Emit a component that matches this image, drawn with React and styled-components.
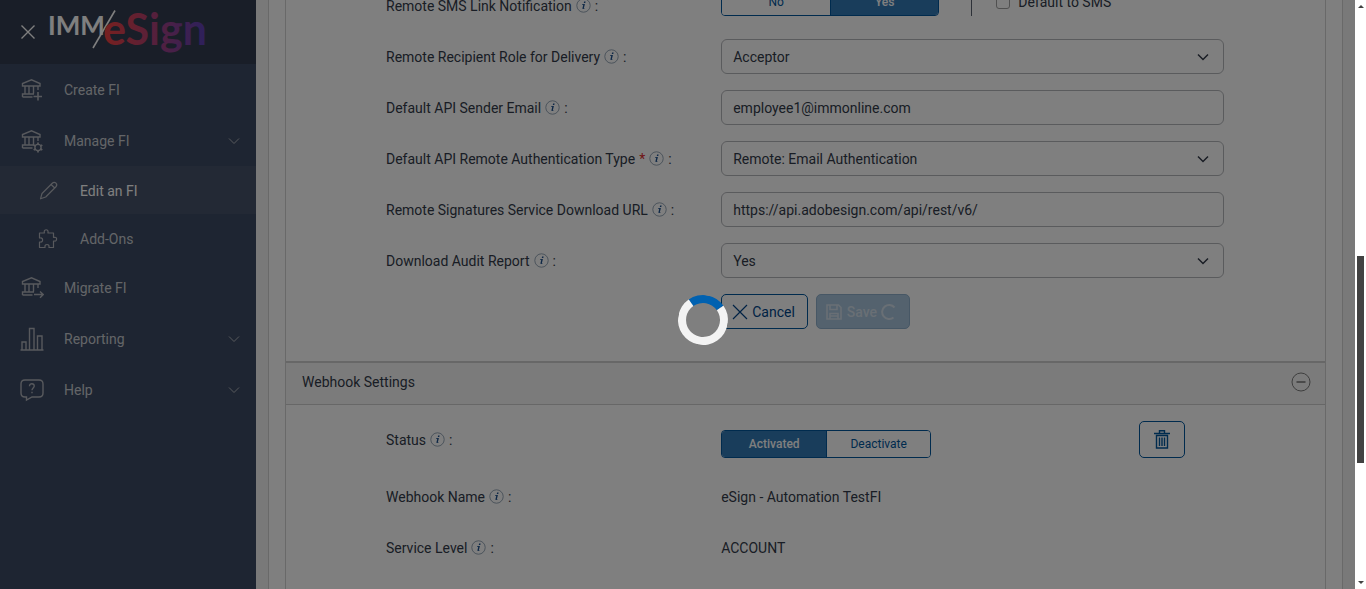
import React from 'react'
import styled, { createGlobalStyle } from 'styled-components'

const GlobalStyle = createGlobalStyle`
    *{
        box-sizing:border-box;
    }
    body{
        margin:0;
        font-family:Roboto, "Liberation Sans", sans-serif;
        font-size:14px;
        line-height:20px;
        color:#333b4a;
        background-color:#ffffff;
    }
    button, input, select{
        font:inherit;
        color:inherit;
        margin:0;
    }
`

const Page = styled.div`
    display:flex;
    height:100vh;
    overflow:hidden;
`

/* sidebar */
const Sidebar = styled.nav`
    flex:none;
    width:256px;
    background-color:#3c4a64;
    color:#c8cad0;
`

const SidebarTop = styled.div`
    display:flex;
    align-items:center;
    height:64px;
    padding-left:20px;
    gap:12px;
    background-color:#323c50;
`

const CloseButton = styled.button`
    display:flex;
    padding:0;
    border:0;
    background:none;
    color:#ffffff;
`

const MenuLink = styled.a`
    display:flex;
    align-items:center;
    height:${props => props.$sub ? "48px" : "51px"};
    padding:${props => props.$sub ? "2px 16px 0 36px" : "0 16px 0 20px"};
    gap:20px;
    color:${props => props.$active ? "#ffffff" : "inherit"};
    background-color:${props => props.$active ? "#46526a" : "transparent"};
    text-decoration:none;

    svg{
        flex:none;
        color:#b0b3ba;
    }
`

const MenuText = styled.span`
    flex:1;
`

/* content */
const Content = styled.main`
    flex:1;
    min-width:0;
    padding:0 12px;
    background-color:#f2f2f2;
    overflow:hidden;
`

const Panel = styled.div`
    min-height:100%;
    padding:0 16px;
    border:solid #d2d2d2;
    border-width:0 1px;
    background-color:#ffffff;
`

const Sections = styled.div`
    min-height:100vh;
    border:solid #d2d2d2;
    border-width:0 1px;
`

const Form = styled.form`
    display:flex;
    flex-direction:column;
    gap:16px;
    padding:${props => props.$scrolled ? "0 101px 32px 100px" : "16px 101px 32px 100px"};
    margin-top:${props => props.$scrolled ? "-12px" : "0"};
`

const Row = styled.div`
    display:grid;
    grid-template-columns:2fr 3fr;
    align-items:center;
    min-height:${props => props.$tall ? "42px" : "35px"};
    padding-bottom:${props => props.$tall ? "5px" : "0"};
`

const LabelCell = styled.div`
    display:flex;
    align-items:center;
    white-space:nowrap;
`

const Info = styled.span`
    display:flex;
    margin:0 4px 1px 4px;
`

const Required = styled.span`
    color:#e02b2b;
    margin-left:4px;
`

const ValueCell = styled.div`
    display:flex;
    align-self:${props => props.$top ? "start" : "center"};
`

const TextBox = styled.input`
    width:100%;
    height:35px;
    padding:0 11px;
    border:1px solid #b4b6ba;
    border-radius:6px;
    background-color:#ffffff;
`

const SelectWrap = styled.div`
    position:relative;
    width:100%;

    svg{
        position:absolute;
        right:15px;
        top:12px;
        pointer-events:none;
    }
`

const SelectBox = styled.select`
    width:100%;
    height:35px;
    padding:0 11px;
    border:1px solid #b4b6ba;
    border-radius:6px;
    background-color:#ffffff;
    appearance:none;
`

const Segments = styled.div`
    display:flex;
    height:28px;
    border:1px solid #00569c;
    border-radius:4px;
    overflow:hidden;
`

const Segment = styled.button`
    width:${props => props.$wide ? "108px" : "104px"};
    padding:0;
    border:0;
    font-size:12px;
    font-weight:${props => props.$on ? 500 : 400};
    color:${props => props.$on ? "#ffffff" : "#00569c"};
    background-color:${props => props.$on ? "#337ab7" : "#ffffff"};

    & + &{
        border-left:1px solid #00569c;
    }
`

const SmsOption = styled.div`
    display:flex;
    align-items:center;
    height:28px;
    margin-left:32px;
    padding-left:24px;
    border-left:1px solid #5a6270;
    gap:8px;
`

const Check = styled.input`
    appearance:none;
    width:14px;
    height:14px;
    border:1px solid #a0a0a0;
    border-radius:3px;
`

const Buttons = styled.div`
    display:flex;
    gap:8px;
`

const Button = styled.button`
    display:flex;
    align-items:center;
    height:35px;
    padding:0 12px 0 10px;
    gap:4px;
    border:1px solid #00569c;
    border-radius:5px;
    color:#00458a;
    background-color:#ffffff;

    &:disabled{
        padding:0 12px 0 8px;
        color:#d2dfea;
        font-weight:500;
        border-color:#8fafcb;
        background-color:#a8c4dc;
    }
`

const StatusControls = styled.div`
    display:flex;
    align-items:flex-end;
    justify-content:space-between;
    width:100%;
    padding-right:39px;
`

const TrashButton = styled.button`
    display:flex;
    align-items:center;
    justify-content:center;
    width:46px;
    height:37px;
    padding:0 0 2px;
    border:1px solid #00569c;
    border-radius:5px;
    color:#00569c;
    background-color:#ffffff;
`

const SectionHeader = styled.div`
    display:flex;
    align-items:center;
    justify-content:space-between;
    height:44px;
    padding:0 14px 3px 16px;
    border:solid #cfcfcf;
    border-width:2px 0 1px;
    background-color:#f7f7f7;
`

const SectionTitle = styled.h2`
    margin:0;
    font-size:14px;
    font-weight:400;
`

const Collapse = styled.button`
    display:flex;
    padding:0;
    border:0;
    background:none;
    color:#7c7c7c;
`

/* scrollbar */
const Scrollbar = styled.div`
    display:flex;
    flex-direction:column;
    align-items:center;
    flex:none;
    width:11px;
    padding:4px 0;
    background-color:#ffffff;
`

const Track = styled.div`
    flex:1;
    display:grid;
    grid-template-rows:248fr 207fr 118fr;
    width:7px;
`

const Thumb = styled.div`
    grid-row:2;
    background-color:#424242;
`

/* loading state on top of everything but the scrollbar */
const Overlay = styled.div`
    position:fixed;
    inset:0 11px 0 0;
    background-color:rgba(0, 0, 0, 0.5);
`

const Spinner = styled.div`
    position:absolute;
    left:50%;
    top:50%;
    width:50px;
    height:50px;
    border:8px solid #f3f3f3;
    border-top-color:#0061b0;
    border-radius:50%;
    transform:rotate(10deg);
`

const Icon = ({ size = 24, children, width = 1.4 }) => (
  <svg width={size} height={size} viewBox={`0 0 ${size} ${size}`} fill="none" stroke="currentColor" strokeWidth={width} aria-hidden="true">
    {children}
  </svg>
)

const BankIcon = ({ children }) => (
  <Icon>
    <path d="M2.5 8V5.5L11.5 1.8L20 5.5V8ZM5 8V15.5M9 8V15.5M13.5 8V15.5M18 8V12M2.5 19V16H14M2.5 19H12.5" />
    {children}
  </Icon>
)

const CreateIcon = () => (
  <BankIcon><path d="M18 14V22.5M13.5 18.5H22" strokeWidth="1.6" /></BankIcon>
)

const ManageIcon = () => (
  <BankIcon>
    <circle cx="18" cy="18.5" r="3.1" />
    <path d="M18 13.5V15.5M18 21.5V23.500M13.700 16L15.400 17M20.600 20L22.300 21M13.700 21L15.400 20M20.600 17L22.300 16" strokeWidth="1.8" />
  </BankIcon>
)

const MigrateIcon = () => (
  <BankIcon><path d="M14 18.5H23M20 15.5L23.2 18.5L20 21.8" /></BankIcon>
)

const PencilIcon = () => (
  <Icon width={1.2}>
    <path d="M4.500 19.800L6 14.500L16 4.500C17.500 3 19 3.200 20 4.200C21 5.200 21 6.600 19.700 8L9.700 18L4.500 19.800ZM15 5.500L18.800 9" strokeLinejoin="round" />
  </Icon>
)

const PuzzleIcon = () => (
  <Icon width={1.2}>
    <path d="M3.500 6H8.300V5C7.600 2 12.700 2 12 5V6H17.500V10.300H18.500C21.300 9.700 21.300 14.500 18.500 14H17.500V20.500H13V19.500C13.500 16.800 8.500 16.800 9 19.500V20.500H3.500V15H4.500C7.300 15.500 7.300 10.500 4.500 11H3.500Z" strokeLinejoin="round" />
  </Icon>
)

const ChartIcon = () => (
  <Icon>
    <path d="M0.500 23H23.500M2 23V15H6V23M9.500 23V1.500H14V23M17.500 23V9H22V23" />
  </Icon>
)

const HelpIcon = () => (
  <Icon>
    <path d="M5 2H19Q23 2 23 6V15Q23 19 19 19H12L6.500 22V19H5Q1 19 1 15V6Q1 2 5 2Z" />
    <path d="M9.500 8.300C9.500 4.800 14.500 5 14.200 8.200C14 10 12 10 12 12.300M12 13.800V15.300" />
  </Icon>
)

const DownIcon = ({ width }) => (
  <Icon size={12} width={width}><path d="M1 3.500L6 8.500L11 3.500" /></Icon>
)

const TrashIcon = () => (
  <Icon size={20}>
    <path d="M2 4.500H18M7.500 4V1.800H12.500V4M4.500 6.500V19H15.500V6.500ZM7.500 8.500V17M10 8.500V17M12.500 8.500V17" />
  </Icon>
)

const InfoIcon = () => (
  <svg width="15" height="15" viewBox="0 0 15 15" aria-hidden="true">
    <circle cx="7.500" cy="7.500" r="6.700" fill="none" stroke="#7c91a4" strokeWidth="0.800" />
    <path d="M8.100 3.600h1.500l-.3 1.500H7.800zM6.100 5.900h2.800l-1 4c-.1.500.2.500.8.100l.2.300c-1 1-2.800 1.200-2.400-.2l.8-3.300h-1.200z" fill="#1c4f8c" />
  </svg>
)

const Logo = () => (
  <svg width="164" height="56" viewBox="0 0 164 56" role="img" aria-label="IMM/eSign">
    <defs>
      <linearGradient id="esign" gradientUnits="userSpaceOnUse" x1="56" y1="0" x2="158" y2="0">
        <stop offset="0" stopColor="#f04040" />
        <stop offset="0.300" stopColor="#c8405f" />
        <stop offset="0.650" stopColor="#93408f" />
        <stop offset="1" stopColor="#5a40b8" />
      </linearGradient>
    </defs>
    <text x="0" y="31" fontFamily="Lato, sans-serif" fontSize="26" fontWeight="700" fill="#ffffff">IMM</text>
    <path d="M45 44L67 6.500" stroke="#ffffff" strokeWidth="1.600" />
    <text x="55" y="41" fontFamily="Lato, sans-serif" fontSize="43" fontWeight="700" fill="url(#esign)">eSign</text>
  </svg>
)

const menu = [
  { text: "Create FI", icon: <CreateIcon /> },
  { text: "Manage FI", icon: <ManageIcon />, opens: true },
  { text: "Edit an FI", icon: <PencilIcon />, sub: true, active: true },
  { text: "Add-Ons", icon: <PuzzleIcon />, sub: true },
  { text: "Migrate FI", icon: <MigrateIcon /> },
  { text: "Reporting", icon: <ChartIcon />, opens: true },
  { text: "Help", icon: <HelpIcon />, opens: true },
]

const FieldLabel = ({ htmlFor, text, required }) => (
  <LabelCell>
    {htmlFor ? <label htmlFor={htmlFor}>{text}</label> : <span>{text}</span>}
    {required && <Required>*</Required>}
    <Info><InfoIcon /></Info>:
  </LabelCell>
)

const SelectField = ({ id, text, value, required }) => (
  <Row>
    <FieldLabel htmlFor={id} text={text} required={required} />
    <SelectWrap>
      <SelectBox id={id} defaultValue={value}>
        <option>{value}</option>
      </SelectBox>
      <DownIcon width={1.5} />
    </SelectWrap>
  </Row>
)

const TextField = ({ id, text, value }) => (
  <Row>
    <FieldLabel htmlFor={id} text={text} />
    <TextBox id={id} type="text" defaultValue={value} />
  </Row>
)

const App = () => {
  return (
    <Page>
      <GlobalStyle />
      <Sidebar>
        <SidebarTop>
          <CloseButton type="button" aria-label="Close menu">
            <Icon size={16}><path d="M1.500 1.500L14.500 14.500M14.500 1.500L1.500 14.500" /></Icon>
          </CloseButton>
          <Logo />
        </SidebarTop>
        {menu.map(item => (
          <MenuLink key={item.text} href="#" $sub={item.sub} $active={item.active}>
            {item.icon}
            <MenuText>{item.text}</MenuText>
            {item.opens && <DownIcon width={1} />}
          </MenuLink>
        ))}
      </Sidebar>
      <Content>
        <Panel>
          <Sections>
            <Form $scrolled>
              <Row>
                <FieldLabel text="Remote SMS Link Notification" />
                <ValueCell $top>
                  <Segments>
                    <Segment type="button" $wide>No</Segment>
                    <Segment type="button" $wide $on>Yes</Segment>
                  </Segments>
                  <SmsOption>
                    <Check type="checkbox" id="sms" />
                    <label htmlFor="sms">Default to SMS</label>
                  </SmsOption>
                </ValueCell>
              </Row>
              <SelectField id="role" text="Remote Recipient Role for Delivery" value="Acceptor" />
              <TextField id="sender" text="Default API Sender Email" value="employee1@immonline.com" />
              <SelectField id="auth" text="Default API Remote Authentication Type" value="Remote: Email Authentication" required />
              <TextField id="url" text="Remote Signatures Service Download URL" value="https://api.adobesign.com/api/rest/v6/" />
              <SelectField id="audit" text="Download Audit Report" value="Yes" />
              <Row>
                <span />
                <Buttons>
                  <Button type="button">
                    <Icon size={16} width={1.2}><path d="M1 1L15 15M15 1L1 15" /></Icon>
                    Cancel
                  </Button>
                  <Button type="submit" disabled>
                    <Icon size={18} width={1.6}>
                      <path d="M2 2H13.500L16 4.500V16H2ZM5 2V6.500H12V2M5 16V10.500H13V16M5 13H13" />
                    </Icon>
                    Save
                    <Icon size={16} width={2}><path d="M13.500 3.500A7 7 0 1 0 12.500 13.500" /></Icon>
                  </Button>
                </Buttons>
              </Row>
            </Form>
            <SectionHeader>
              <SectionTitle>Webhook Settings</SectionTitle>
              <Collapse type="button" aria-label="Collapse section">
                <Icon size={20} width={1}>
                  <circle cx="10" cy="10" r="9" />
                  <path d="M5.500 10H14.500" strokeWidth="1.600" />
                </Icon>
              </Collapse>
            </SectionHeader>
            <Form>
              <Row $tall>
                <FieldLabel text="Status" />
                <StatusControls>
                  <Segments>
                    <Segment type="button" $on>Activated</Segment>
                    <Segment type="button">Deactivate</Segment>
                  </Segments>
                  <TrashButton type="button" aria-label="Delete webhook"><TrashIcon /></TrashButton>
                </StatusControls>
              </Row>
              <Row>
                <FieldLabel text="Webhook Name" />
                <ValueCell>eSign - Automation TestFI</ValueCell>
              </Row>
              <Row>
                <FieldLabel text="Service Level" />
                <ValueCell>ACCOUNT</ValueCell>
              </Row>
            </Form>
          </Sections>
        </Panel>
      </Content>
      <Scrollbar>
        <svg width="6" height="4" viewBox="0 0 6 4"><path d="M3 1L6 4H0Z" fill="#424242" /></svg>
        <Track><Thumb /></Track>
        <svg width="6" height="4" viewBox="0 0 6 4"><path d="M3 3L6 0H0Z" fill="#424242" /></svg>
      </Scrollbar>
      <Overlay role="status" aria-label="Loading">
        <Spinner />
      </Overlay>
    </Page>
  )
}

export default App
